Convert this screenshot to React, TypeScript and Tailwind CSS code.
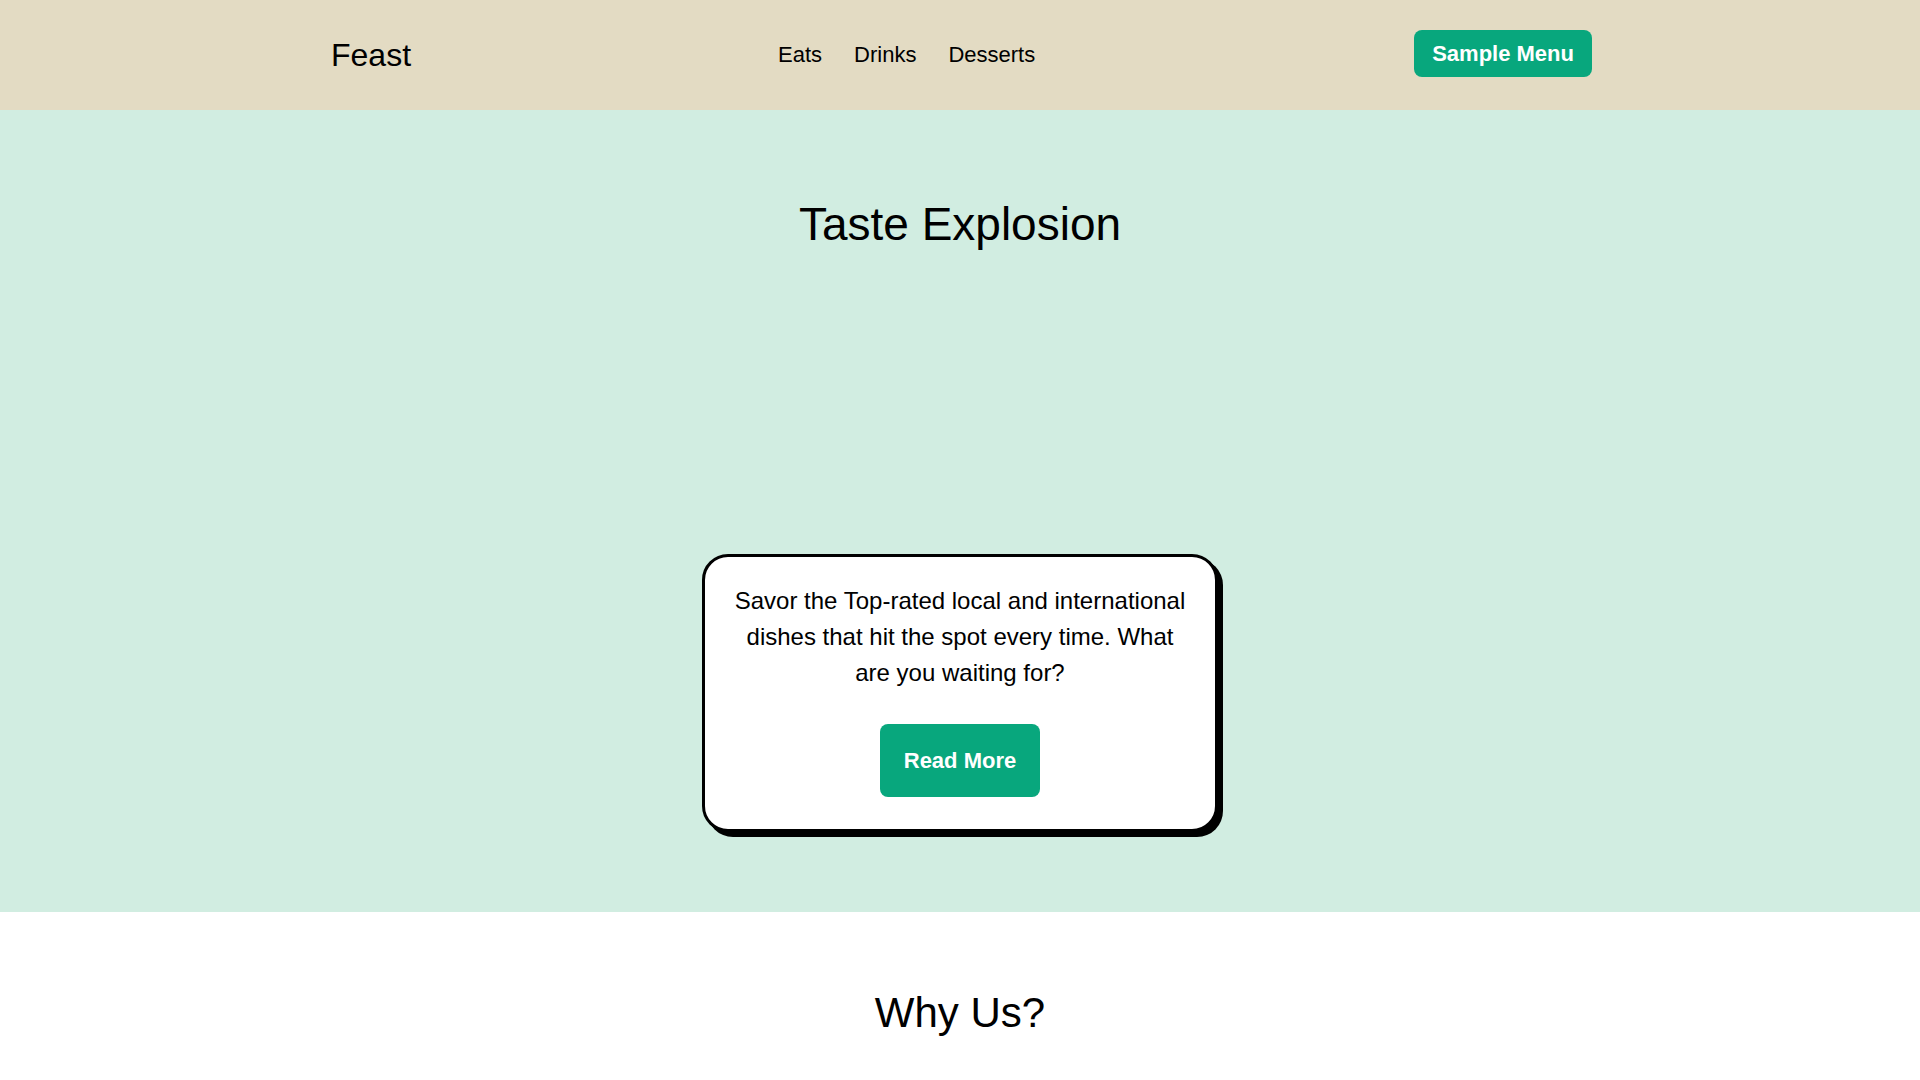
import React from "react";

const links = ["Eats", "Drinks", "Desserts"];

function Header() {
  return (
    <header className="bg-[#e3dbc3]">
      <div className="mx-auto flex h-[110px] max-w-[1264px] items-center justify-between">
        <a className="pl-[3px] text-[32px] text-black">Feast</a>
        <nav className="mb-[2px] mr-[12px] flex items-center gap-8 text-[22px] text-black">
          {links.map((l) => (
            <a key={l}>{l}</a>
          ))}
        </nav>
        <button className="mb-[3px] rounded-lg bg-[#08a77d] px-[18px] py-[11px] text-[22px] font-bold leading-[1.15] text-white">
          Sample Menu
        </button>
      </div>
    </header>
  );
}

function Hero() {
  return (
    <section className="flex flex-col items-center bg-[#d1ede1] pb-[80px] pt-[88px]">
      <h1 className="text-[46px] leading-[1.15] text-black">Taste Explosion</h1>
      <div className="mt-[303px] flex w-[516px] flex-col items-center rounded-[26px] border-[3px] border-black bg-white px-[28px] pb-[32px] pt-[26px] shadow-[5px_5px_0_#000]">
        <p className="text-center text-[24px] leading-[1.5] text-black">
          Savor the Top-rated local and international dishes that hit the spot
          every time. What are you waiting for?
        </p>
        <button className="mt-[33px] rounded-lg bg-[#08a77d] p-6 text-[22px] font-bold leading-[1.15] text-white">
          Read More
        </button>
      </div>
    </section>
  );
}

export default function App() {
  return (
    <div className="min-h-screen bg-white font-['Liberation_Sans',Arial,sans-serif]">
      <Header />
      <Hero />
      <section className="flex flex-col items-center pb-24 pt-[77px]">
        <h2 className="text-[42px] leading-[1.15] text-black">Why Us?</h2>
      </section>
    </div>
  );
}
